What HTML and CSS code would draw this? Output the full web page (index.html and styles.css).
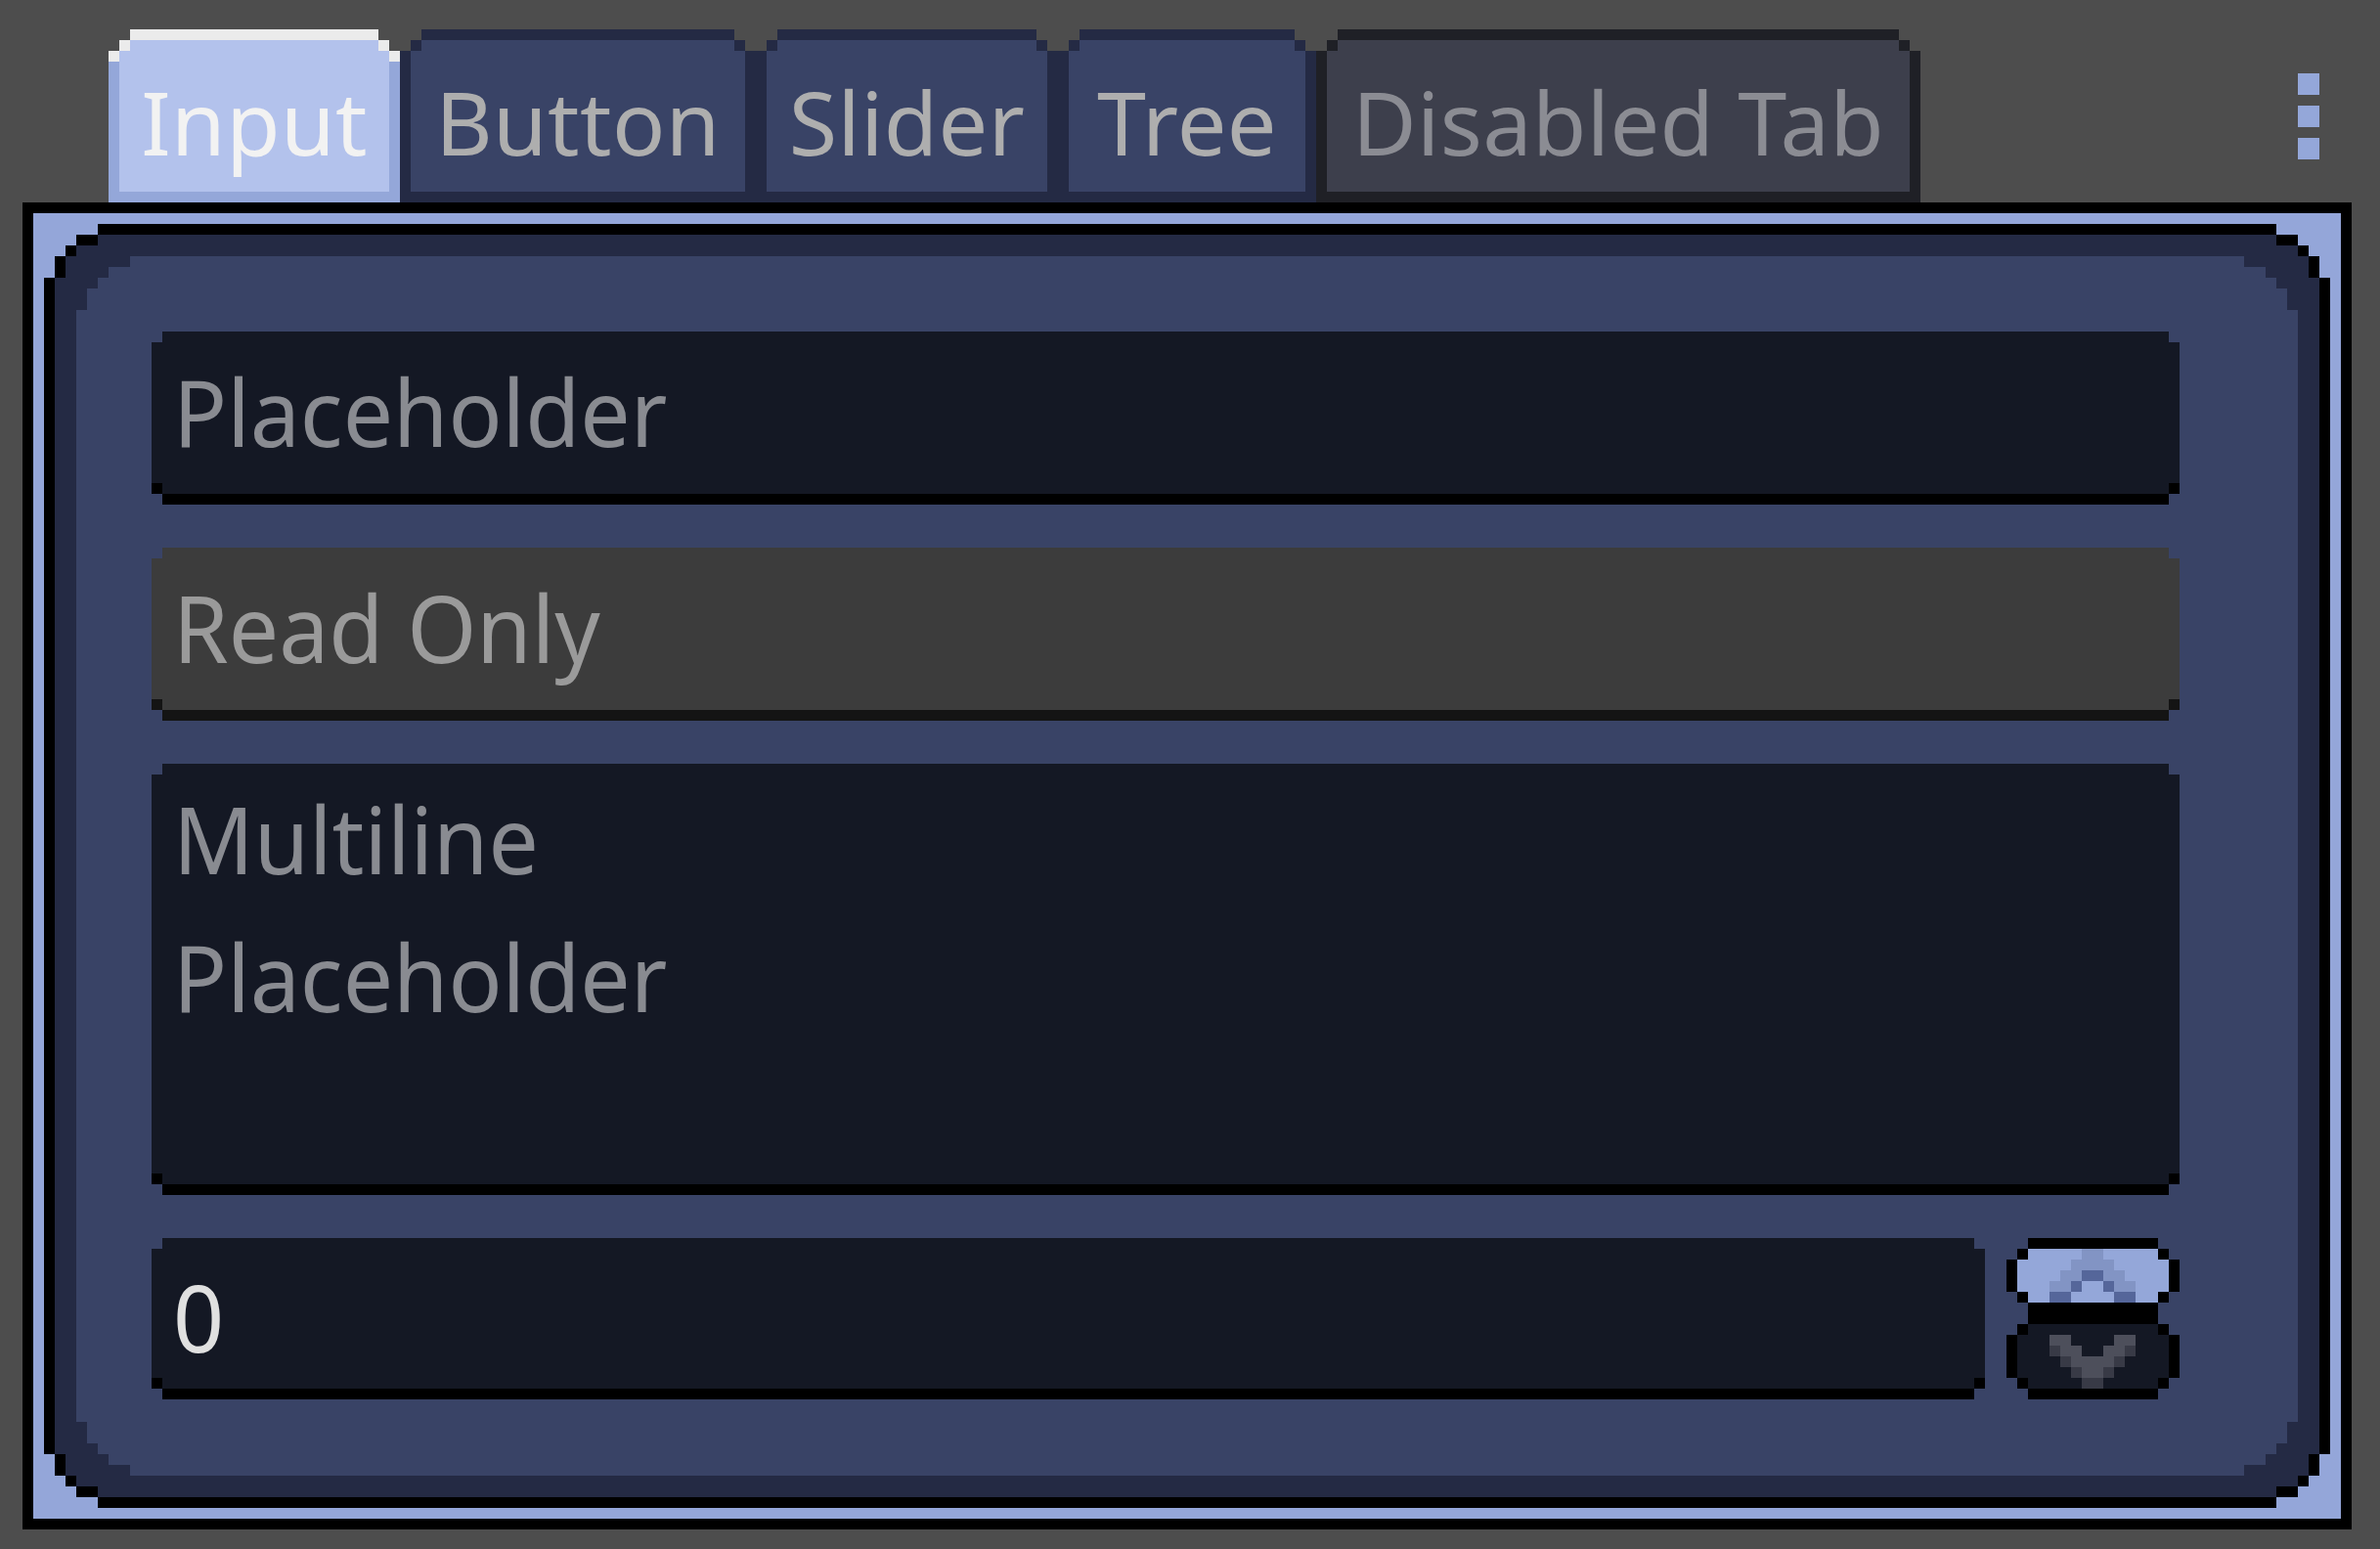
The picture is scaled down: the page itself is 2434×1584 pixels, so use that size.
FILE: index.html
```html
<!DOCTYPE html>
<html lang="en">
<head>
<meta charset="utf-8">
<title>Theme preview</title>
<link rel="stylesheet" href="styles.css">
</head>
<body>
<div class="root">
  <div class="tabbar">
    <div class="tab tab-active w-input"><div class="tab-face">Input</div></div>
    <div class="tab w-button"><div class="tab-face">Button</div></div>
    <div class="tab w-slider"><div class="tab-face">Slider</div></div>
    <div class="tab w-tree"><div class="tab-face">Tree</div></div>
    <div class="tab tab-disabled w-disabled"><div class="tab-face">Disabled Tab</div></div>
    <div class="menu"><span></span><span></span><span></span></div>
  </div>
  <div class="panel">
    <div class="panel-rim">
      <div class="panel-edge">
        <div class="panel-band">
          <div class="panel-body">
            <div class="field"><div class="field-face"><span class="txt">Placeholder</span></div></div>
            <div class="field field-ro"><div class="field-face"><span class="txt">Read Only</span></div></div>
            <div class="field field-multi"><div class="field-face"><span class="txt">Multiline<br>Placeholder</span></div></div>
            <div class="spin">
              <div class="field field-spin"><div class="field-face"><span class="txt">0</span></div></div>
              <svg class="spin-btns" viewBox="0 0 177 165" shape-rendering="crispEdges" xmlns="http://www.w3.org/2000/svg">
                <g fill="#94a7d9">
                  <rect x="22" y="11" width="133" height="55"/>
                  <rect x="11" y="22" width="155" height="33"/>
                </g>
                <g fill="#141824">
                  <rect x="22" y="88" width="133" height="66"/>
                  <rect x="11" y="99" width="155" height="44"/>
                </g>
                <g fill="#000">
                  <rect x="22" y="0" width="133" height="11"/>
                  <rect x="11" y="11" width="11" height="11"/>
                  <rect x="155" y="11" width="11" height="11"/>
                  <rect x="0" y="22" width="11" height="33"/>
                  <rect x="166" y="22" width="11" height="33"/>
                  <rect x="11" y="55" width="11" height="11"/>
                  <rect x="155" y="55" width="11" height="11"/>
                  <rect x="22" y="66" width="133" height="22"/>
                  <rect x="11" y="88" width="11" height="11"/>
                  <rect x="155" y="88" width="11" height="11"/>
                  <rect x="0" y="99" width="11" height="44"/>
                  <rect x="166" y="99" width="11" height="44"/>
                  <rect x="11" y="143" width="11" height="11"/>
                  <rect x="155" y="143" width="11" height="11"/>
                  <rect x="22" y="154" width="133" height="11"/>
                </g>
                <g fill="#8294c4">
                  <rect x="77" y="11" width="22" height="11"/>
                  <rect x="66" y="22" width="44" height="11"/>
                  <rect x="55" y="33" width="22" height="11"/>
                  <rect x="99" y="33" width="22" height="11"/>
                  <rect x="44" y="44" width="22" height="11"/>
                  <rect x="110" y="44" width="22" height="11"/>
                </g>
                <g fill="#55669a">
                  <rect x="77" y="33" width="22" height="11"/>
                  <rect x="66" y="44" width="11" height="11"/>
                  <rect x="99" y="44" width="11" height="11"/>
                  <rect x="44" y="55" width="22" height="11"/>
                  <rect x="110" y="55" width="22" height="11"/>
                </g>
                <g fill="#4d4f5b">
                  <rect x="44" y="99" width="22" height="11"/>
                  <rect x="110" y="99" width="22" height="11"/>
                  <rect x="55" y="110" width="22" height="11"/>
                  <rect x="99" y="110" width="22" height="11"/>
                  <rect x="66" y="121" width="44" height="11"/>
                  <rect x="77" y="132" width="22" height="11"/>
                </g>
                <g fill="#383a46">
                  <rect x="44" y="110" width="11" height="11"/>
                  <rect x="121" y="110" width="11" height="11"/>
                  <rect x="55" y="121" width="11" height="11"/>
                  <rect x="110" y="121" width="11" height="11"/>
                  <rect x="66" y="132" width="11" height="11"/>
                  <rect x="99" y="132" width="11" height="11"/>
                  <rect x="77" y="143" width="22" height="11"/>
                </g>
              </svg>
            </div>
          </div>
        </div>
      </div>
    </div>
  </div>
</div>
</body>
</html>
```
FILE: styles.css
```css
* { box-sizing: border-box; }

html, body {
  margin: 0;
  background: #4d4d4d;
}

body {
  font-family: "Noto Sans", "Open Sans", sans-serif;
}

.root {
  padding: 30px 29px 20px 23px;
}

/* ---------- tab bar ---------- */
.tabbar {
  display: flex;
  height: 177px;
  padding-left: 88px;
}

.tab {
  flex: none;
  height: 177px;
  padding: 11px;
  background: #242a44;
  clip-path: polygon(22px 0, calc(100% - 22px) 0, calc(100% - 22px) 11px, calc(100% - 11px) 11px,
    calc(100% - 11px) 22px, 100% 22px, 100% 100%, 0 100%, 0 22px, 11px 22px, 11px 11px, 22px 11px);
}

.tab-face {
  height: 100%;
  background: #394366;
  color: #aeaeae;
  font-size: 90px;
  line-height: 90px;
  letter-spacing: 0.4px;
  padding-top: 38px;
  text-align: center;
  white-space: nowrap;
  clip-path: polygon(11px 0, calc(100% - 11px) 0, calc(100% - 11px) 11px, 100% 11px,
    100% 100%, 0 100%, 0 11px, 11px 11px);
}

.tab-active {
  background: linear-gradient(#ebebeb 0 33px, #94a7d9 33px);
}
.tab-active .tab-face {
  background: #b3c2ec;
  color: #f2f2f2;
}

.tab-disabled {
  background: #1f2026;
}
.tab-disabled .tab-face {
  background: #3d3f4c;
  color: #8b8c93;
}

.w-input { width: 298px; }
.w-button { width: 364px; }
.w-slider { width: 309px; }
.w-tree { width: 264px; }
.w-disabled { width: 618px; }

.menu {
  margin-left: auto;
  margin-right: 33px;
  padding-top: 45px;
  display: flex;
  flex-direction: column;
  gap: 11px;
}
.menu span {
  display: block;
  width: 22px;
  height: 22px;
  background: #94a7d9;
}

/* ---------- panel ---------- */
.panel {
  background: #000;
  padding: 11px;
}

.panel-rim {
  background: #94a6d9;
  padding: 11px;
}

.panel-edge,
.panel-body {
  clip-path: polygon(
    0 55px, 11px 55px, 11px 33px, 22px 33px, 22px 22px, 33px 22px, 33px 11px, 55px 11px, 55px 0,
    calc(100% - 55px) 0, calc(100% - 55px) 11px, calc(100% - 33px) 11px, calc(100% - 33px) 22px,
    calc(100% - 22px) 22px, calc(100% - 22px) 33px, calc(100% - 11px) 33px, calc(100% - 11px) 55px, 100% 55px,
    100% calc(100% - 55px), calc(100% - 11px) calc(100% - 55px), calc(100% - 11px) calc(100% - 33px),
    calc(100% - 22px) calc(100% - 33px), calc(100% - 22px) calc(100% - 22px), calc(100% - 33px) calc(100% - 22px),
    calc(100% - 33px) calc(100% - 11px), calc(100% - 55px) calc(100% - 11px), calc(100% - 55px) 100%,
    55px 100%, 55px calc(100% - 11px), 33px calc(100% - 11px), 33px calc(100% - 22px), 22px calc(100% - 22px),
    22px calc(100% - 33px), 11px calc(100% - 33px), 11px calc(100% - 55px), 0 calc(100% - 55px));
}

.panel-edge {
  background: #000;
  padding: 11px;
}

.panel-band {
  background: #242a44;
  padding: 22px;
  clip-path: polygon(
    0 44px, 11px 44px, 11px 22px, 22px 22px, 22px 11px, 44px 11px, 44px 0,
    calc(100% - 44px) 0, calc(100% - 44px) 11px, calc(100% - 22px) 11px, calc(100% - 22px) 22px,
    calc(100% - 11px) 22px, calc(100% - 11px) 44px, 100% 44px,
    100% calc(100% - 44px), calc(100% - 11px) calc(100% - 44px), calc(100% - 11px) calc(100% - 22px),
    calc(100% - 22px) calc(100% - 22px), calc(100% - 22px) calc(100% - 11px), calc(100% - 44px) calc(100% - 11px),
    calc(100% - 44px) 100%,
    44px 100%, 44px calc(100% - 11px), 22px calc(100% - 11px), 22px calc(100% - 22px), 11px calc(100% - 22px),
    11px calc(100% - 44px), 0 calc(100% - 44px));
}

.panel-body {
  background: #394366;
  padding: 77px 121px 78px 77px;
  display: flex;
  flex-direction: column;
  gap: 44px;
}

/* ---------- fields ---------- */
.field,
.field-face {
  clip-path: polygon(11px 0, calc(100% - 11px) 0, calc(100% - 11px) 11px, 100% 11px,
    100% calc(100% - 11px), calc(100% - 11px) calc(100% - 11px), calc(100% - 11px) 100%,
    11px 100%, 11px calc(100% - 11px), 0 calc(100% - 11px), 0 11px, 11px 11px);
}

.field {
  height: 177px;
  background: #000;
  padding-bottom: 11px;
}

.field-face {
  height: 100%;
  background: #141824;
  color: #898b91;
  font-size: 95px;
  line-height: 95px;
  padding: 34px 22px 0;
  white-space: nowrap;
}

.txt {
  display: inline-block;
  transform: scaleX(0.96);
  transform-origin: 0 0;
}

.field-ro {
  background: #141414;
}
.field-ro .field-face {
  background: #3c3c3c;
  color: #9a9a9a;
}

.field-multi {
  height: 441px;
}
.field-multi .field-face {
  line-height: 141px;
  padding-top: 6px;
}

.spin {
  display: flex;
  gap: 22px;
  height: 165px;
}

.field-spin {
  flex: 1;
  height: 165px;
}
.field-spin .field-face {
  color: #e0e0e0;
  padding-top: 33px;
}

.spin-btns {
  display: block;
  flex: none;
  width: 177px;
  height: 165px;
}
```
